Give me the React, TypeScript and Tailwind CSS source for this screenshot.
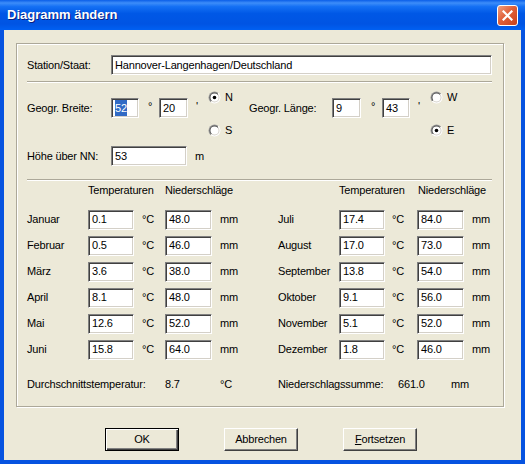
import React from 'react';

type Month = { name: string; temp: string; rain: string };

const left: Month[] = [
  { name: 'Januar', temp: '0.1', rain: '48.0' },
  { name: 'Februar', temp: '0.5', rain: '46.0' },
  { name: 'März', temp: '3.6', rain: '38.0' },
  { name: 'April', temp: '8.1', rain: '48.0' },
  { name: 'Mai', temp: '12.6', rain: '52.0' },
  { name: 'Juni', temp: '15.8', rain: '64.0' },
];

const right: Month[] = [
  { name: 'Juli', temp: '17.4', rain: '84.0' },
  { name: 'August', temp: '17.0', rain: '73.0' },
  { name: 'September', temp: '13.8', rain: '54.0' },
  { name: 'Oktober', temp: '9.1', rain: '56.0' },
  { name: 'November', temp: '5.1', rain: '52.0' },
  { name: 'Dezember', temp: '1.8', rain: '46.0' },
];

// sunken classic edit box
const Field: React.FC<{ w: string; children?: React.ReactNode }> = ({ w, children }) => (
  <div
    className={`${w} h-[20px] shrink-0 bg-white border border-t-[#808080] border-l-[#808080] border-b-white border-r-white shadow-[inset_1px_1px_0_#404040,inset_-1px_-1px_0_#D4D0C8] flex items-center pl-[3px] whitespace-nowrap overflow-hidden`}
  >
    {children}
  </div>
);

const Radio: React.FC<{ id: string; checked?: boolean; label: string }> = ({ id, checked, label }) => (
  <div className="h-[16px] flex items-center gap-[4px]">
    <svg width="13" height="13" viewBox="0 0 13 13">
      <defs>
        <linearGradient id={`${id}o`} x1="0" y1="0" x2="1" y2="1">
          <stop offset="0.5" stopColor="#9a9a9a" />
          <stop offset="0.5" stopColor="#ffffff" />
        </linearGradient>
        <linearGradient id={`${id}i`} x1="0" y1="0" x2="1" y2="1">
          <stop offset="0.5" stopColor="#505050" />
          <stop offset="0.5" stopColor="#D4D0C8" />
        </linearGradient>
      </defs>
      <circle cx="6.5" cy="6.5" r="6" fill={`url(#${id}o)`} />
      <circle cx="6.5" cy="6.5" r="5" fill={`url(#${id}i)`} />
      <circle cx="6.5" cy="6.5" r="4" fill="#ffffff" />
      {checked && <circle cx="6.5" cy="6.5" r="1.8" fill="#000000" />}
    </svg>
    <span>{label}</span>
  </div>
);

const Etched: React.FC<{ className?: string }> = ({ className }) => (
  <div className={`h-[2px] border-t border-t-[#ACA899] border-b border-b-white ${className ?? ''}`} />
);

const MonthCells: React.FC<{ m: Month; degPad: string }> = ({ m, degPad }) => (
  <>
    <div className="flex items-center h-[20px]">{m.name}</div>
    <Field w="w-[46px]">{m.temp}</Field>
    <div className={`flex items-center ${degPad}`}>°C</div>
    <Field w="w-[47px]">{m.rain}</Field>
    <div className="flex items-center pl-[8px]">mm</div>
  </>
);

const App: React.FC = () => {
  return (
    <div className="w-[525px] h-[464px] flex flex-col bg-[#0653E0] font-['Liberation_Sans',Arial,sans-serif] text-[11px] tracking-[-0.18px] text-black">
      {/* Title bar */}
      <div className="h-[30px] shrink-0 flex items-center justify-between pl-[7px] pr-[7px] bg-[linear-gradient(to_bottom,#0A5EE8_0%,#3D8DF9_10%,#1470F4_22%,#0058E6_45%,#0054E3_80%,#0060F2_100%)]">
        <span className="text-white font-bold text-[13px] tracking-[0px] [text-shadow:1px_1px_0_#0A1F80]">
          Diagramm ändern
        </span>
        <div className="w-[21px] h-[21px] rounded-[3px] border border-white bg-[linear-gradient(135deg,#F0A080_0%,#E0603A_45%,#C8401C_100%)] flex items-center justify-center">
          <svg width="11" height="11" viewBox="0 0 11 11">
            <path d="M1.5 1.5 L9.5 9.5 M9.5 1.5 L1.5 9.5" stroke="#ffffff" strokeWidth="2.2" strokeLinecap="square" />
          </svg>
        </div>
      </div>

      {/* Client area */}
      <div className="flex-1 mx-[4px] mb-[4px] bg-[#ECE9D8] flex flex-col">
        <div className="mt-[13px] ml-[12px] w-[488px] border border-[#ACA899] shadow-[inset_1px_1px_0_#fff,1px_1px_0_#fff] pl-[10px] pr-[11px] pt-[11px] pb-[13px]">
          {/* Station */}
          <div className="flex items-center h-[20px]">
            <div className="w-[84px]">Station/Staat:</div>
            <Field w="w-[381px]">Hannover-Langenhagen/Deutschland</Field>
          </div>

          <Etched className="mt-[6px]" />

          {/* Coordinates */}
          <div className="mt-[6px] flex h-[49px]">
            <div className="flex items-center h-[20px] mt-[9px]">
              <div className="w-[84px]">Geogr. Breite:</div>
              <Field w="w-[28px]">
                <span className="bg-[#316AC5] text-white leading-[16px] inline-block">52</span>
              </Field>
              <div className="w-[20px] self-start pl-[9px]">°</div>
              <Field w="w-[29px]">20</Field>
              <div className="w-[20px] self-start pl-[8px]">'</div>
            </div>
            <div className="w-[41px] flex flex-col justify-between">
              <Radio id="rn" checked label="N" />
              <Radio id="rs" label="S" />
            </div>
            <div className="flex items-center h-[20px] mt-[9px]">
              <div className="w-[83px]">Geogr. Länge:</div>
              <Field w="w-[29px]">9</Field>
              <div className="w-[21px] self-start pl-[10px]">°</div>
              <Field w="w-[28px]">43</Field>
              <div className="w-[20px] self-start pl-[8px]">'</div>
            </div>
            <div className="flex flex-col justify-between">
              <Radio id="rw" label="W" />
              <Radio id="re" checked label="E" />
            </div>
          </div>

          {/* Height */}
          <div className="mt-[8px] flex items-center h-[20px]">
            <div className="w-[84px]">Höhe über NN:</div>
            <Field w="w-[76px]">53</Field>
            <div className="pl-[8px]">m</div>
          </div>

          <Etched className="mt-[13px]" />

          {/* Monthly values */}
          <div className="grid grid-cols-[61px_46px_31px_47px_66px_61px_46px_32px_47px_auto] mt-[1px]">
            <div className="col-start-2 col-span-2 h-[16px] flex items-center whitespace-nowrap">Temperaturen</div>
            <div className="col-span-2 flex items-center whitespace-nowrap">Niederschläge</div>
            <div className="col-start-7 col-span-2 flex items-center whitespace-nowrap">Temperaturen</div>
            <div className="col-span-2 flex items-center pl-[1px] whitespace-nowrap">Niederschläge</div>
          </div>

          <div className="grid grid-cols-[61px_46px_31px_47px_66px_61px_46px_32px_47px_auto] gap-y-[6px] mt-[11px]">
            {left.map((m, i) => (
              <React.Fragment key={m.name}>
                <MonthCells m={m} degPad="pl-[8px]" />
                <MonthCells m={right[i]} degPad="pl-[7px]" />
              </React.Fragment>
            ))}
          </div>

          {/* Totals */}
          <div className="mt-[17px] flex items-center h-[16px] whitespace-nowrap">
            <div className="w-[138px]">Durchschnittstemperatur:</div>
            <div className="w-[55px]">8.7</div>
            <div className="w-[58px]">°C</div>
            <div className="w-[120px]">Niederschlagssumme:</div>
            <div className="w-[53px]">661.0</div>
            <div>mm</div>
          </div>
        </div>

        {/* Buttons */}
        <div className="mt-[21px] flex pl-[101px] gap-[45px]">
          <button className="w-[74px] h-[23px] bg-[#ECE9D8] border border-black shadow-[inset_1px_1px_0_#fff,inset_-1px_-1px_0_#404040,inset_-2px_-2px_0_#808080]">
            OK
          </button>
          <button className="w-[74px] h-[23px] bg-[#ECE9D8] border border-t-white border-l-white border-r-[#404040] border-b-[#404040] shadow-[inset_-1px_-1px_0_#808080]">
            Abbrechen
          </button>
          <button className="w-[74px] h-[23px] bg-[#ECE9D8] border border-t-white border-l-white border-r-[#404040] border-b-[#404040] shadow-[inset_-1px_-1px_0_#808080]">
            <span className="underline">F</span>ortsetzen
          </button>
        </div>
      </div>
    </div>
  );
};

export default App;
